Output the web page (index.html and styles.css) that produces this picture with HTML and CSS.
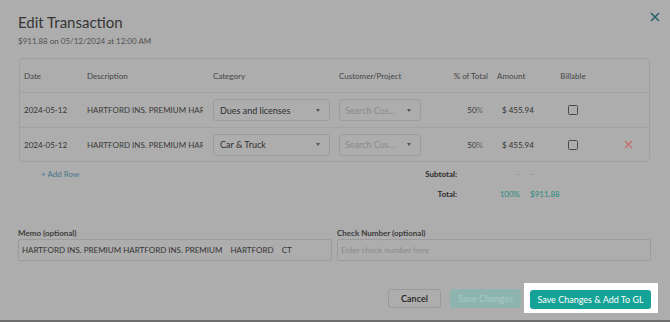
FILE: index.html
```html
<!DOCTYPE html>
<html>
<head>
<meta charset="utf-8">
<link rel="stylesheet" href="styles.css">
</head>
<body>
<div class="modal">
  <div class="head">
    <div>
      <div class="title">Edit Transaction</div>
      <div class="subtitle">$911.88 on 05/12/2024 at 12:00 AM</div>
    </div>
    <svg class="close" width="10" height="10" viewBox="0 0 10 10"><path d="M1 1L9 9M9 1L1 9" stroke="#2e5e6a" stroke-width="1.6" fill="none"/></svg>
  </div>

  <div class="card">
    <div class="row hdr">
      <div class="c date">Date</div>
      <div class="c desc">Description</div>
      <div class="c cat">Category</div>
      <div class="c cust">Customer/Project</div>
      <div class="c pct">% of Total</div>
      <div class="c amt">Amount</div>
      <div class="c bill">Billable</div>
      <div class="c del"></div>
    </div>
    <div class="row">
      <div class="c date">2024-05-12</div>
      <div class="c desc"><span class="clip">HARTFORD INS. PREMIUM HARTFORD INS. PREMIUM</span></div>
      <div class="c cat"><div class="select"><span>Dues and licenses</span><i class="arrow"></i></div></div>
      <div class="c cust"><div class="select small"><span class="ph">Search Cus...</span><i class="arrow"></i></div></div>
      <div class="c pct v">50<span class="pc">%</span></div>
      <div class="c amt v">$ 455.94</div>
      <div class="c bill"><span class="check"></span></div>
      <div class="c del"></div>
    </div>
    <div class="row last">
      <div class="c date">2024-05-12</div>
      <div class="c desc"><span class="clip">HARTFORD INS. PREMIUM HARTFORD INS. PREMIUM</span></div>
      <div class="c cat"><div class="select"><span>Car &amp; Truck</span><i class="arrow"></i></div></div>
      <div class="c cust"><div class="select small"><span class="ph">Search Cus...</span><i class="arrow"></i></div></div>
      <div class="c pct v">50<span class="pc">%</span></div>
      <div class="c amt v">$ 455.94</div>
      <div class="c bill"><span class="check"></span></div>
      <div class="c del"><svg width="9" height="9" viewBox="0 0 9 9"><path d="M1 1L8 8M8 1L1 8" stroke="#c66a6a" stroke-width="1.3" fill="none"/></svg></div>
    </div>
  </div>

  <div class="totals">
    <div class="addrow">+ Add Row</div>
    <div class="sums">
      <div class="sumrow"><span class="lbl">Subtotal:</span><span class="sv p dash">–</span><span class="sv a dash">–</span></div>
      <div class="sumrow"><span class="lbl">Total:</span><span class="sv p teal">100%</span><span class="sv a teal">$911.88</span></div>
    </div>
  </div>

  <div class="fields">
    <div class="field">
      <div class="flabel">Memo (optional)</div>
      <div class="input">HARTFORD INS. PREMIUM HARTFORD INS. PREMIUM&nbsp;&nbsp;&nbsp;&nbsp;HARTFORD&nbsp;&nbsp;&nbsp;&nbsp;CT</div>
    </div>
    <div class="field">
      <div class="flabel">Check Number (optional)</div>
      <div class="input ph">Enter check number here</div>
    </div>
  </div>

  <div class="footer">
    <div class="btn cancel">Cancel</div>
    <div class="btn disabled">Save Changes</div>
    <div class="spot"><div class="btn primary">Save Changes &amp; Add To GL</div></div>
  </div>
</div>
<div class="edge"></div>
</body>
</html>
```

FILE: styles.css
```css
html, body {
  margin: 0;
  padding: 0;
}
body {
  width: 670px;
  height: 322px;
  background: #adadad;
  font-family: Lato, "Open Sans", sans-serif;
  color: #333;
  overflow: hidden;
  display: flex;
  flex-direction: column;
}
.modal {
  height: 320px;
  box-sizing: border-box;
  padding: 13px 12px 0 18px;
  display: flex;
  flex-direction: column;
}
.head {
  display: flex;
  justify-content: space-between;
  align-items: flex-start;
}
.title {
  font-size: 15px;
  line-height: 18px;
  color: #363636;
}
.subtitle {
  font-size: 8px;
  line-height: 10px;
  margin-top: 5px;
  color: #505050;
}
.close {
  margin-top: -1px;
  margin-right: -2px;
}
.card {
  margin-top: 12px;
  margin-left: 1px;
  width: 631px;
  border: 1px solid #a0a0a0;
  border-radius: 4px;
  box-sizing: border-box;
}
.row {
  display: grid;
  grid-template-columns: 63px 126px 126px 91px 58px 65px 40px 1fr;
  padding-left: 4px;
  height: 34px;
  align-items: center;
  border-bottom: 1px solid #a2a2a2;
  font-size: 8px;
  color: #333;
}
.row.hdr {
  height: 33px;
  color: #454545;
  font-size: 8px;
}
.row.last {
  border-bottom: none;
  height: 33px;
}
.c {
  white-space: nowrap;
  overflow: hidden;
}
.desc .clip {
  display: block;
  width: 116px;
  overflow: hidden;
  color: #3a3a3a;
}
.pct {
  text-align: right;
}
.pct.v {
  padding-right: 5px;
}
.pc {
  color: #666;
}
.amt {
  padding-left: 9px;
}
.amt.v {
  padding-left: 14px;
}
.bill {
  text-align: center;
  display: flex;
  justify-content: center;
}
.check {
  width: 8px;
  height: 8px;
  border: 1.5px solid #4a4a4a;
  border-radius: 1.5px;
  display: block;
}
.del {
  display: flex;
  padding-left: 31px;
}
.select {
  width: 117px;
  height: 22px;
  box-sizing: border-box;
  border: 1px solid #9c9c9c;
  border-radius: 3px;
  display: flex;
  align-items: center;
  justify-content: space-between;
  padding: 0 9px 0 6px;
  font-size: 9px;
  color: #2e2e2e;
}
.select.small {
  width: 82px;
  padding-left: 5px;
}
.ph {
  color: #8a8a8a;
}
.arrow {
  width: 0;
  height: 0;
  border-left: 2.5px solid transparent;
  border-right: 2.5px solid transparent;
  border-top: 3px solid #555;
}
.totals {
  display: flex;
  margin-top: 7px;
  height: 48px;
}
.addrow {
  margin-left: 23px;
  font-size: 8px;
  line-height: 10px;
  color: #4a7689;
  width: 360px;
}
.sums {
  display: flex;
  flex-direction: column;
  gap: 10px;
}
.sumrow {
  display: flex;
  align-items: center;
  height: 10px;
  font-size: 8px;
}
.lbl {
  width: 56px;
  text-align: right;
  font-weight: bold;
  color: #2c2c2c;
}
.sv.p {
  width: 63px;
  text-align: right;
}
.sv.a {
  padding-left: 10px;
}
.dash {
  color: #8a8a8a;
}
.sv.p.dash {
  width: 64px;
}
.sv.a.dash {
  padding-left: 9px;
}
.teal {
  color: #288c80;
}
.fields {
  display: flex;
  gap: 5px;
  margin-top: 11px;
  width: 633px;
}
.field {
  flex: 1;
}
.flabel {
  font-size: 8px;
  line-height: 10px;
  font-weight: bold;
  color: #3c3c3c;
  margin-bottom: 1px;
}
.input {
  height: 22px;
  box-sizing: border-box;
  border: 1px solid #9c9c9c;
  border-radius: 2px;
  font-size: 8px;
  display: flex;
  align-items: center;
  padding-left: 3px;
  color: #333;
  white-space: pre;
}
.input.ph {
  color: #8a8a8a;
}
.footer {
  display: flex;
  justify-content: flex-end;
  align-items: center;
  margin-top: 22px;
  gap: 9px;
}
.btn {
  height: 19px;
  box-sizing: border-box;
  border-radius: 3px;
  font-size: 9px;
  display: flex;
  align-items: center;
  justify-content: center;
}
.cancel {
  width: 53px;
  border: 1px solid #999;
  color: #222;
  font-weight: 600;
}
.disabled {
  width: 71px;
  background: #8db4ae;
  color: #a9ccc7;
}
.spot {
  background: #fff;
  padding: 7px 7px 4px 6px;
  margin-left: -6px;
}
.primary {
  width: 121px;
  background: #14a396;
  color: #fff;
  font-size: 9px;
}
.edge {
  height: 2px;
  background: #6e6e6e;
}
```
